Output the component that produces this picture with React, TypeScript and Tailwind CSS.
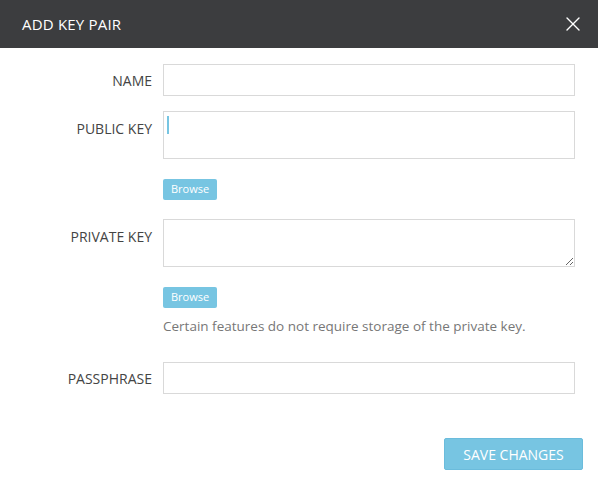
import { X } from 'lucide-react'

function Label({ children, className = '' }: { children: string; className?: string }) {
  return (
    <label className={`w-[163px] shrink-0 text-right pr-[11px] text-[14px] text-[#444] ${className}`}>
      {children}
    </label>
  )
}

function BrowseButton() {
  return (
    <button className="h-[21px] w-[54px] rounded-[2px] bg-[#77c5e2] text-[11px] text-white">
      Browse
    </button>
  )
}

export default function App() {
  return (
    <div className="w-[598px] h-[484px] bg-white" style={{ fontFamily: '"Open Sans", sans-serif' }}>
      {/* Header */}
      <div className="h-[48px] bg-[#3c3d3f] flex items-center justify-between pl-[22px] pr-[13px]">
        <h2 className="text-[15px] text-white tracking-[0.2px]">ADD KEY PAIR</h2>
        <X className="w-[24px] h-[24px] text-white" strokeWidth={1.4} />
      </div>

      <div className="pt-[16px] pr-[23px]">
        {/* Name */}
        <div className="flex items-center">
          <Label>NAME</Label>
          <input className="h-[32px] flex-1 border border-[#d9d9d9] outline-none" />
        </div>

        {/* Public key */}
        <div className="flex mt-[15px]">
          <Label className="pt-[7px]">PUBLIC KEY</Label>
          <div className="flex-1 flex flex-col items-start">
            <div className="relative w-full h-[48px] border border-[#d9d9d9]">
              <div className="absolute left-[3px] top-[4px] w-[2px] h-[18px] bg-[#77c5e2]" />
            </div>
            <div className="mt-[20px] flex">
              <BrowseButton />
            </div>
          </div>
        </div>

        {/* Private key */}
        <div className="flex mt-[19px]">
          <Label className="pt-[7px]">PRIVATE KEY</Label>
          <div className="flex-1 flex flex-col items-start">
            <textarea className="block w-full h-[48px] border border-[#d9d9d9] outline-none" />
            <div className="mt-[20px] flex">
              <BrowseButton />
            </div>
            <p className="mt-[8px] text-[13.5px] leading-[20px] text-[#777]">
              Certain features do not require storage of the private key.
            </p>
          </div>
        </div>

        {/* Passphrase */}
        <div className="flex items-center mt-[26px]">
          <Label>PASSPHRASE</Label>
          <input className="h-[32px] flex-1 border border-[#d9d9d9] outline-none" />
        </div>
      </div>

      <div className="flex justify-end pr-[15px] mt-[44px]">
        <button className="h-[32px] w-[139px] rounded-[2px] bg-[#77c5e2] border border-[#6bbcdc] text-[14px] text-white">
          SAVE CHANGES
        </button>
      </div>
    </div>
  )
}
